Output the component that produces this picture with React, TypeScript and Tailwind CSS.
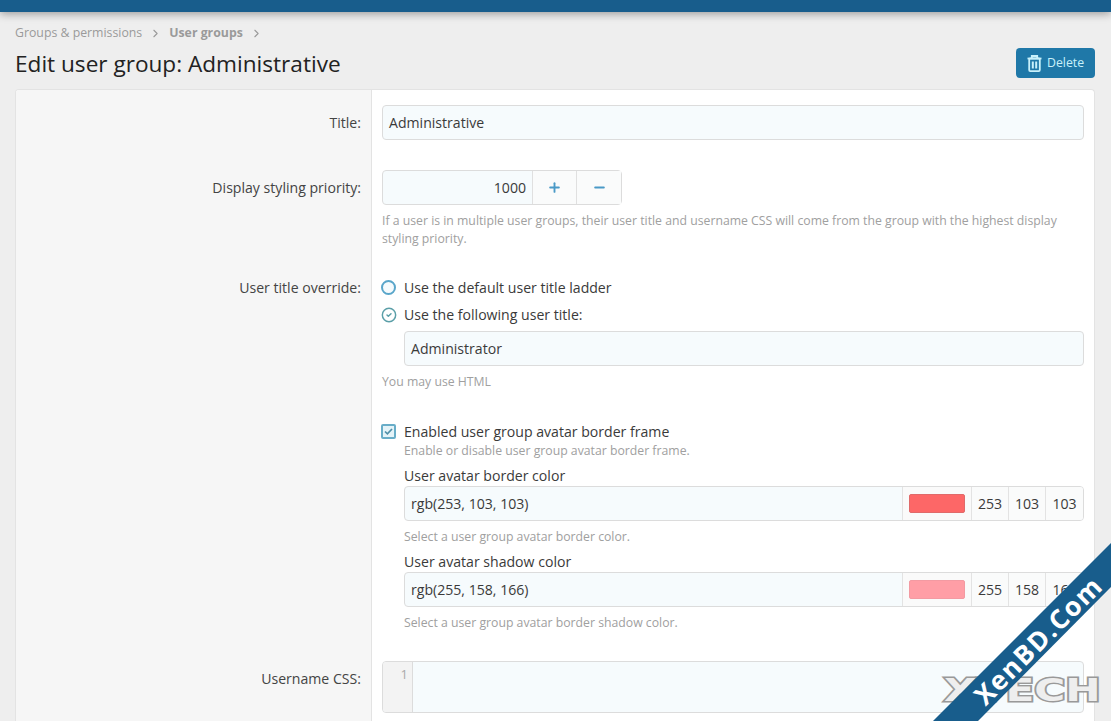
import { ChevronRight, CircleCheck, Plus, Minus } from 'lucide-react';
import type { ReactNode } from 'react';

const font = "font-['Open_Sans','Noto_Sans',sans-serif]";
const inputBox = 'bg-[#f6fbfd] border border-[#dcdcdc] rounded-[4px] text-[#3a3a3a] text-[14.1px]';

const Row = ({ label, labelClass, children }: { label: string; labelClass: string; children: ReactNode }) => (
    <div className="flex">
        <div className={`w-[356px] shrink-0 bg-[#f6f6f6] border-r border-[#e3e3e3] text-right pr-[10px] text-[14.1px] text-[#444] ${labelClass}`}>
            {label}
        </div>
        <div className="flex-1 min-w-0 pl-[10px] pr-[10px]">{children}</div>
    </div>
);

const Hint = ({ children, className }: { children: ReactNode; className: string }) => (
    <div className={`text-[12.25px] leading-[18px] text-[#a0a0a0] ${className}`}>{children}</div>
);

const ColorField = ({ value, swatch, parts }: { value: string; swatch: string; parts: string[] }) => (
    <div className={`flex h-[35px] overflow-hidden ${inputBox}`}>
        <div className="flex-1 flex items-center pl-[6px]">{value}</div>
        <div className="w-[70px] flex items-center justify-center border-x border-[#e3e3e3] bg-[#fafafa] pr-[1px]">
            <div className={`w-[56px] h-[19px] rounded-[2px] border ${swatch}`} />
        </div>
        {parts.map((part, i) => (
            <div key={i} className="w-[37px] flex items-center justify-center border-r border-[#e3e3e3] last:border-r-0 bg-[#fafbfb]">
                {part}
            </div>
        ))}
    </div>
);

const TrashIcon = () => (
    <svg width="15" height="17" viewBox="0 0 15 17" fill="none" stroke="#c8f1fb" strokeWidth="1.8">
        <path d="M0.5 3.5h14" />
        <path d="M4.8 3.5V1h5.4v2.5" />
        <rect x="2.2" y="3.5" width="10.6" height="12.6" rx="1" />
        <path d="M5.8 6.4v7M9.2 6.4v7" strokeWidth="2" />
    </svg>
);

const App = () => {
    return (
        <div className={`relative h-[721px] overflow-hidden bg-[#eeeeee] ${font}`}>
            <div className="h-[12px] bg-[#185d8c] shadow-[0_2px_8px_rgba(0,0,0,0.35)]" />

            <div className="px-[15px]">
                <div className="flex items-center h-[20px] mt-[11px] text-[12.3px] text-[#9a9a9a]">
                    <span>Groups &amp; permissions</span>
                    <ChevronRight className="w-[13px] h-[13px] mx-[7px]" />
                    <span className="font-bold">User groups</span>
                    <ChevronRight className="w-[13px] h-[13px] ml-[7px]" />
                </div>

                <div className="flex items-center justify-between mt-[-1px] h-[43px]">
                    <h1 className="text-[22.6px] text-[#222]">Edit user group: Administrative</h1>
                    <button className="flex items-center gap-[5px] h-[30px] w-[79px] mr-[1px] pl-[11px] bg-[#1f78a8] rounded-[4px] text-[12.3px] text-[#c8f1fb] mt-[-1px]">
                        <TrashIcon />
                        Delete
                    </button>
                </div>

                <div className="mt-[4px] mr-[1px] rounded-t-[4px] border border-[#e3e3e3] border-b-0 bg-white overflow-hidden">
                    <Row label="Title:" labelClass="pt-[22px] h-[65px]">
                        <div className={`mt-[15px] h-[35px] flex items-center pl-[6px] ${inputBox}`}>Administrative</div>
                    </Row>

                    <Row label="Display styling priority:" labelClass="pt-[22px] h-[122px]">
                        <div className={`mt-[15px] w-[240px] h-[35px] flex ${inputBox}`}>
                            <div className="flex-1 flex items-center justify-end pr-[6px]">1000</div>
                            <div className="w-[44px] flex items-center justify-center border-l border-[#e0e0e0] bg-[#fafbfb]">
                                <Plus className="w-[15px] h-[15px] text-[#4a9ac7]" strokeWidth={3} />
                            </div>
                            <div className="w-[45px] flex items-center justify-center border-l border-[#e0e0e0] bg-[#fafbfb]">
                                <Minus className="w-[15px] h-[15px] text-[#4a9ac7]" strokeWidth={3} />
                            </div>
                        </div>
                        <Hint className="mt-[7px]">
                            If a user is in multiple user groups, their user title and username CSS will come from the group with the highest display styling priority.
                        </Hint>
                    </Row>

                    <Row label="User title override:" labelClass="pt-[1px] leading-[19px] h-[370px]">
                        <div className="text-[14.1px] text-[#3a3a3a]">
                            <div className="flex items-center h-[21px] ml-[-1px]">
                                <span className="w-[15px] h-[15px] rounded-full border-2 border-[#5aa6ca] bg-[#f6fbfd]" />
                                <span className="ml-[8px]">Use the default user title ladder</span>
                            </div>
                            <div className="flex items-center h-[21px] mt-[6px] ml-[-1px]">
                                <CircleCheck className="w-[16px] h-[16px] text-[#5b9fa8]" strokeWidth={2.2} />
                                <span className="ml-[7px]">Use the following user title:</span>
                            </div>
                            <div className={`ml-[22px] mt-[6px] h-[35px] flex items-center pl-[6px] ${inputBox}`}>Administrator</div>
                            <Hint className="mt-[7px]">You may use HTML</Hint>

                            <div className="flex items-center h-[21px] mt-[30px] ml-[-1px]">
                                <span className="w-[15px] h-[15px] rounded-[2px] border-2 border-[#68adc8] bg-[#e4f3f8] flex items-center justify-center">
                                    <svg width="11" height="9" viewBox="0 0 11 9" fill="none" stroke="#4f8fa8" strokeWidth="1.7">
                                        <path d="M2 4.5l2.4 2.4L9 2" />
                                    </svg>
                                </span>
                                <span className="ml-[8px]">Enabled user group avatar border frame</span>
                            </div>
                            <div className="ml-[22px]">
                                <Hint className="mt-0">Enable or disable user group avatar border frame.</Hint>
                                <div className="mt-[6px] mb-[1px] h-[19px] leading-[19px]">User avatar border color</div>
                                <ColorField value="rgb(253, 103, 103)" swatch="bg-[#fd6767] border-[#e06a6a]" parts={['253', '103', '103']} />
                                <Hint className="mt-[7px]">Select a user group avatar border color.</Hint>
                                <div className="mt-[6px] mb-[1px] h-[19px] leading-[19px]">User avatar shadow color</div>
                                <ColorField value="rgb(255, 158, 166)" swatch="bg-[#ff9ea6] border-[#f39aa2]" parts={['255', '158', '166']} />
                                <Hint className="mt-[7px]">Select a user group avatar border shadow color.</Hint>
                            </div>
                        </div>
                    </Row>

                    <Row label="Username CSS:" labelClass="pt-[21px] h-[90px]">
                        <div className={`mt-[14px] h-[52px] flex overflow-hidden ${inputBox}`}>
                            <div className="w-[30px] bg-[#f3f3f3] border-r border-[#dcdcdc] text-right pr-[4px] pt-[3px] text-[13px] text-[#aaa]">1</div>
                            <div className="flex-1" />
                        </div>
                    </Row>
                </div>
            </div>

            {/* watermark + corner ribbon */}
            <div className="absolute left-[944px] top-[671px] origin-left scale-x-[1.32] text-[32px] leading-[38px] font-bold text-[#eeeeee] font-['DejaVu_Sans',sans-serif] [-webkit-text-stroke:3px_#999999] [paint-order:stroke_fill]">
                XTECH
            </div>
            <svg className="absolute left-0 top-0 pointer-events-none" width="1111" height="721" viewBox="0 0 1111 721">
                <polygon points="1111,543 1111,587 978,721 933,721" fill="#185d8c" />
            </svg>
            <div className="absolute left-[955px] top-[625px] w-[160px] text-center text-[26.5px] leading-[36px] font-bold tracking-[1.5px] text-white -rotate-45 whitespace-nowrap">
                XenBD.Com
            </div>
        </div>
    );
};

export default App;
